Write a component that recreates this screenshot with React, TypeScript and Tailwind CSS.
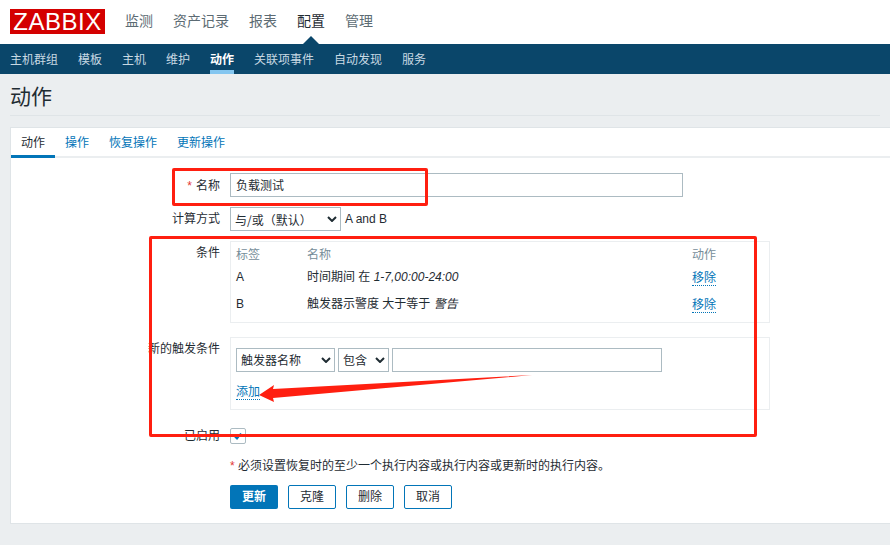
const font = { fontFamily: '"Liberation Sans", "Noto Sans CJK SC", sans-serif' }

const topMenu = ["监测", "资产记录", "报表", "配置", "管理"]
const subMenu = ["主机群组", "模板", "主机", "维护", "动作", "关联项事件", "自动发现", "服务"]
const tabs = ["动作", "操作", "恢复操作", "更新操作"]

function Row({ label, required, className = "", labelClass = "", children }: { label: string; required?: boolean; className?: string; labelClass?: string; children: React.ReactNode }) {
  return (
    <div className={`flex gap-[10px] ${className}`}>
      <label className={`w-[209px] shrink-0 whitespace-nowrap text-right text-[12px] leading-[18px] text-[#1f2c33] ${labelClass}`}>
        {required && <span className="mr-1 text-[#e33734]">*</span>}
        {label}
      </label>
      {children}
    </div>
  )
}

function Select({ value, width, valueClass = "" }: { value: string; width: string; valueClass?: string }) {
  return (
    <div className={`flex h-6 items-center justify-between border border-[#acbbc2] bg-white pl-[4px] pr-[3px] text-[12px] text-[#1f2c33] ${width}`}>
      <span className={`whitespace-nowrap pt-[1px] ${valueClass}`}>{value}</span>
      <svg viewBox="0 0 10 6" className="h-[6px] w-[10px]" fill="none" stroke="#1f2c33" strokeWidth="2">
        <path d="M1 1l4 4 4-4" />
      </svg>
    </div>
  )
}

function DottedLink({ children, className = "" }: { children: React.ReactNode; className?: string }) {
  return <span className={`border-b border-dotted border-[#0275b8] text-[12px] leading-[14px] text-[#0275b8] ${className}`}>{children}</span>
}

function ConditionRow({ tag, name, value, className }: { tag: string; name: string; value: string; className: string }) {
  return (
    <div className={`flex items-center text-[12px] text-[#1f2c33] ${className}`}>
      <span className="w-[71px]">{tag}</span>
      <span className="w-[385px] whitespace-nowrap">
        {name} <em>{value}</em>
      </span>
      <DottedLink className="mt-[2px]">移除</DottedLink>
    </div>
  )
}

export default function App() {
  return (
    <div className="relative h-[545px] w-[890px] overflow-hidden bg-[#ebeef0]" style={font}>
      {/* top menu */}
      <div className="relative flex h-[44px] items-center bg-white pl-[10px]">
        <div className="mb-[1px] flex h-[25px] w-[95px] items-center justify-center bg-[#d40000] text-[24px] leading-none tracking-[0.5px] text-white">
          ZABBIX
        </div>
        <nav className="ml-[20px] flex gap-[20px] pb-[2px] text-[14px]">
          {topMenu.map((m) => (
            <span key={m} className={m === "配置" ? "text-[#1f2c33]" : "text-[#5c6b73]"}>
              {m}
            </span>
          ))}
        </nav>
        <div className="absolute bottom-0 left-[303px] h-0 w-0 border-x-[8px] border-b-[8px] border-x-transparent border-b-[#0a466a]" />
      </div>

      {/* sub menu */}
      <div className="flex h-[30px] gap-[20px] bg-[#0a466a] pl-[10px] text-[12px]">
        {subMenu.map((m) => (
          <span
            key={m}
            className={
              m === "动作"
                ? "border-b-[4px] border-[#84c6f0] pt-[7px] font-bold text-white"
                : "pt-[7px] text-[#c8d9e3]"
            }
          >
            {m}
          </span>
        ))}
      </div>

      {/* title */}
      <div className="mx-[10px] h-[42px] border-b border-[#dfe4e7] pt-[8px] text-[21px] leading-[30px] text-[#1f2c33]">动作</div>

      {/* card */}
      <div className="ml-[10px] mt-[11px] h-[397px] border border-r-0 border-[#dfe4e7] bg-white">
        <div className="flex h-[30px] border-b-2 border-[#ebeef0] text-[12px]">
          {tabs.map((t, i) => (
            <span
              key={t}
              className={
                i === 0
                  ? "h-[30px] border-b-[3px] border-[#0275b8] px-[10px] pt-[6px] text-[#1f2c33]"
                  : "px-[10px] pt-[6px] text-[#0275b8]"
              }
            >
              {t}
            </span>
          ))}
        </div>

        <div className="pt-[15px]">
          <Row label="名称" required className="items-center" labelClass="pt-[1px]">
            <div className="flex h-6 w-[453px] items-center border border-[#acbbc2] pl-[5px] pt-[1px] text-[12px] text-[#1f2c33]">负载测试</div>
          </Row>

          <Row label="计算方式" className="mt-[10px] items-center">
            <div className="flex items-center gap-[4px]">
              <Select value="与/或（默认）" width="w-[111px]" valueClass="font-['Noto_Sans_CJK_TC']" />
              <span className="text-[12px] text-[#1f2c33]">A and B</span>
            </div>
          </Row>

          <Row label="条件" className="mt-[10px]" labelClass="pt-[3px]">
            <div className="h-[82px] w-[540px] border border-[#ebeef0] px-[5px] pt-[4px]">
              <div className="flex text-[12px] leading-[18px] text-[#768d99]">
                <span className="w-[71px]">标签</span>
                <span className="w-[385px]">名称</span>
                <span>动作</span>
              </div>
              <ConditionRow tag="A" name="时间期间 在" value="1-7,00:00-24:00" className="mt-[4px] h-[18px]" />
              <ConditionRow tag="B" name="触发器示警度 大于等于" value="警告" className="mt-[9px] h-[18px]" />
            </div>
          </Row>

          <Row label="新的触发条件" className="mt-[14px]" labelClass="pt-[3px]">
            <div className="h-[73px] w-[540px] border border-[#ebeef0] px-[5px] pt-[10px]">
              <div className="flex gap-[3px]">
                <Select value="触发器名称" width="w-[99px]" />
                <Select value="包含" width="w-[51px]" />
                <div className="h-6 w-[270px] border border-[#acbbc2]" />
              </div>
              <div className="mt-[7px]">
                <DottedLink>添加</DottedLink>
              </div>
            </div>
          </Row>

          <Row label="已启用" className="mt-[17px] items-center">
            <div className="flex h-[16px] w-[16px] items-center justify-center rounded-[2px] border border-[#acbbc2]">
              <svg viewBox="0 0 10 10" className="h-[10px] w-[10px]" fill="none" stroke="#0275b8" strokeWidth="2">
                <path d="M2 5.5l2 2 4-5" />
              </svg>
            </div>
          </Row>

          <div className="ml-[219px] mt-[12px] text-[12px] leading-[18px] text-[#1f2c33]">
            <span className="text-[#e33734]">*</span> 必须设置恢复时的至少一个执行内容或执行内容或更新时的执行内容。
          </div>

          <div className="ml-[219px] mt-[10px] flex gap-[10px] text-[12px]">
            <button className="h-6 w-[48px] rounded-[2px] bg-[#0275b8] font-bold text-white">更新</button>
            <button className="h-6 w-[48px] rounded-[2px] border border-[#0275b8] text-[#1f2c33]">克隆</button>
            <button className="h-6 w-[48px] rounded-[2px] border border-[#0275b8] text-[#1f2c33]">删除</button>
            <button className="h-6 w-[48px] rounded-[2px] border border-[#0275b8] text-[#1f2c33]">取消</button>
          </div>
        </div>
      </div>

      {/* red annotations on top of the screenshot */}
      <div className="absolute left-[172px] top-[168px] h-[38px] w-[256px] rounded-[2px] border-[3px] border-[#ff1f10]" />
      <div className="absolute left-[149px] top-[236px] h-[201px] w-[608px] rounded-[2px] border-[3px] border-[#ff1f10]" />
      <svg className="absolute left-0 top-0 h-[545px] w-[890px]" viewBox="0 0 890 545">
        <polygon points="532,375 273,389 274,385 259,395 274,402 273,398" fill="#ff1f10" />
      </svg>
    </div>
  )
}
